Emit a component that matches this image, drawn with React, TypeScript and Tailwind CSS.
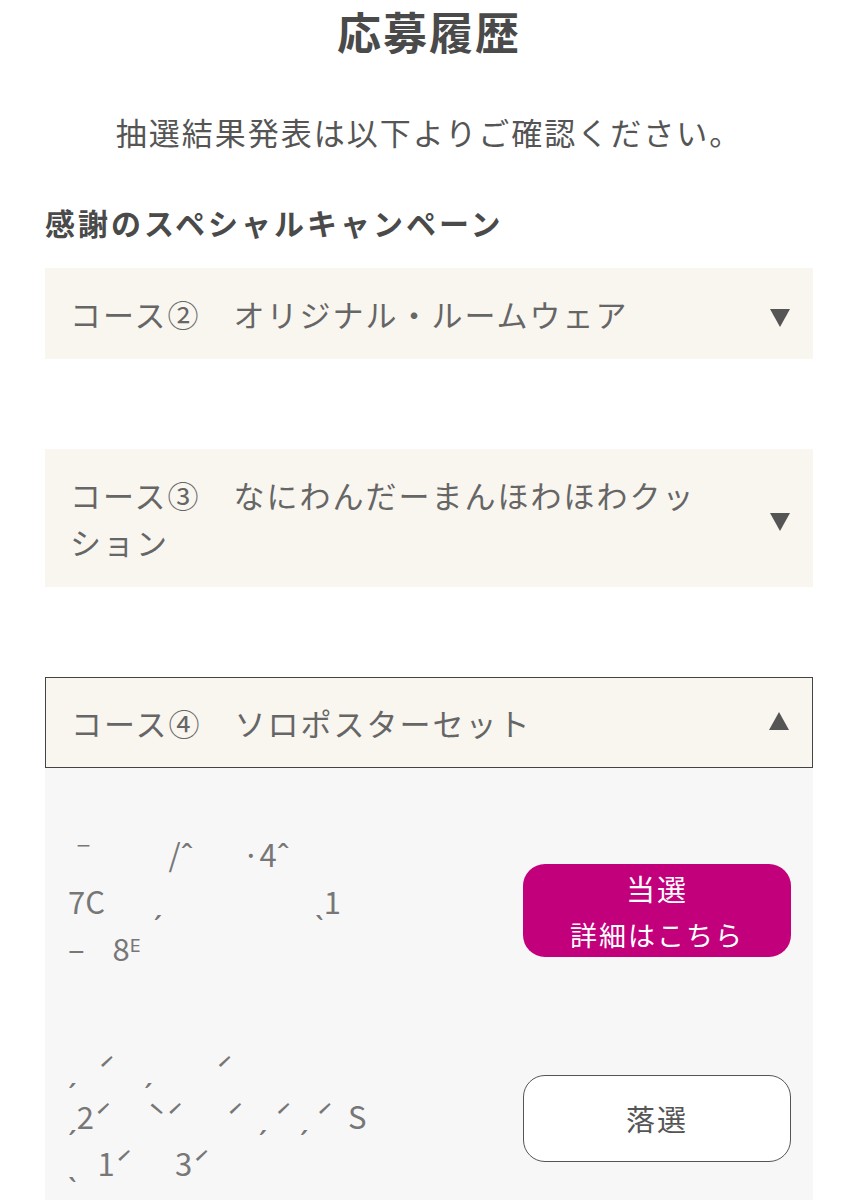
const font = { fontFamily: '"Noto Sans CJK JP", "Noto Sans", sans-serif' };

function Arrow({ up }: { up?: boolean }) {
  return (
    <svg width="22" height="20" viewBox="0 0 22 20" className="shrink-0">
      {up ? (
        <polygon points="11,1 21,19 1,19" fill="#555555" />
      ) : (
        <polygon points="1,1 21,1 11,19" fill="#555555" />
      )}
    </svg>
  );
}

function Course({ label, open }: { label: string; open?: boolean }) {
  return (
    <div
      className={`flex items-center bg-[#f9f6f0] pl-[25px] pr-[22px] ${
        open ? "border border-[#444444] py-[21px]" : "py-[22px]"
      }`}
    >
      <p className="flex-1 text-[31px] leading-[47px] tracking-[2px] text-[#666666]">{label}</p>
      <div className={open ? "ml-[70px] mb-[4px]" : "ml-[70px] mt-[8px]"}>
        <Arrow up={open} />
      </div>
    </div>
  );
}

function Result({ lines, won }: { lines: string[]; won?: boolean }) {
  return (
    <div className="flex items-start pl-[23px] pr-[22px]">
      <div className="flex-1 text-[31px] leading-[47px] text-[#777777] whitespace-pre">
        {lines.map((l, i) => (
          <p key={i}>{l}</p>
        ))}
      </div>
      {won ? (
        <button className="mt-[34px] w-[268px] h-[93px] rounded-[22px] bg-[#c2007b] text-white flex flex-col items-center justify-start pt-[2px]">
          <span className="text-[29px] leading-[44px] tracking-[2px]">当選</span>
          <span className="text-[27px] leading-[50px] tracking-[2px]">詳細はこちら</span>
        </button>
      ) : (
        <button className="mt-[30px] w-[268px] h-[87px] rounded-[22px] border-[1.5px] border-[#555555] bg-white text-[#555555] text-[29px] tracking-[2px]">
          落選
        </button>
      )}
    </div>
  );
}

export default function App() {
  return (
    <div className="w-[858px] min-h-[1200px] bg-white overflow-hidden pt-[4px]" style={font}>
      <h1 className="text-center text-[44px] leading-[54px] font-bold text-[#4a4a4a] tracking-[2px]">
        応募履歴
      </h1>
      <p className="mt-[50px] text-center text-[31px] leading-[48px] tracking-[2px] text-[#555555]">
        抽選結果発表は以下よりご確認ください。
      </p>

      <div className="px-[45px]">
        <h2 className="mt-[42px] text-[30px] leading-[48px] font-bold tracking-[3px] text-[#4a4a4a]">
          感謝のスペシャルキャンペーン
        </h2>

        <div className="mt-[22px] flex flex-col gap-[90px]">
          <Course label="コース②　オリジナル・ルームウェア" />
          <Course label="コース③　なにわんだーまんほわほわクッション" />
          <div>
            <Course label="コース④　ソロポスターセット" open />
            <div className="bg-[#f7f7f7] pt-[62px] pb-[40px] flex flex-col gap-[74px]">
              <Result
                won
                lines={["ˉ          /ˆ       ·4ˆ", "7C       ˏ                      ˎ1", "‒    8ᴱ"]}
              />
              <Result
                lines={["ˏ   ˊ    ˏ         ˊ", "ˏ2ˊ     ˋˊ      ˊ  ˏ ˊ ˏ ˊ  S", "ˎ   1ˊ      3ˊ"]}
              />
            </div>
          </div>
        </div>
      </div>
    </div>
  );
}
